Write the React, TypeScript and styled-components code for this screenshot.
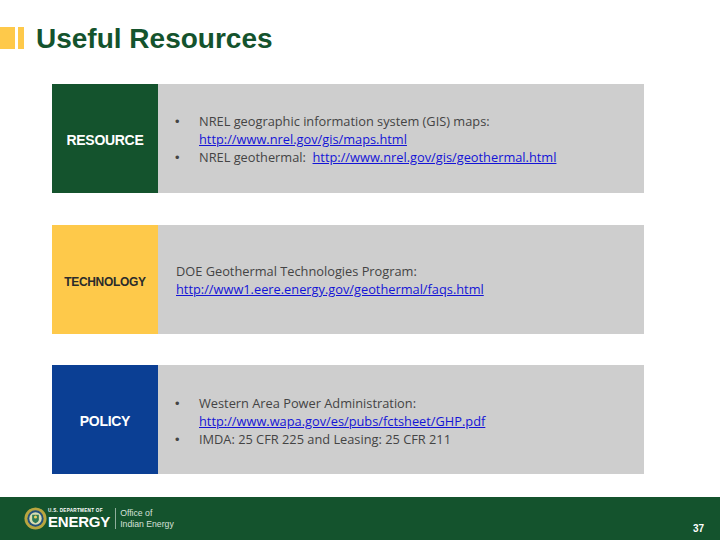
import React from "react";
import styled, { createGlobalStyle } from "styled-components";

const GlobalStyle = createGlobalStyle`
  html, body {
    margin: 0;
    padding: 0;
    background: #fff;
  }
`;

const Slide = styled.div`
  width: 720px;
  height: 540px;
  display: flex;
  flex-direction: column;
  overflow: hidden;
  font-family: "Open Sans", "Liberation Sans", sans-serif;
`;

const Header = styled.header`
  height: 84px;
  flex: none;
  padding-top: 27px;
  box-sizing: border-box;
  display: flex;
  align-items: flex-start;
`;

const Accent = styled.div`
  display: flex;
  gap: 3px;
  height: 22px;
  margin-right: 12px;
`;

const AccentBar = styled.span<{ $w: number }>`
  width: ${(p) => p.$w}px;
  background: #fec94a;
`;

const Title = styled.h1`
  margin: -5px 0 0;
  font-family: "Liberation Sans", Arial, sans-serif;
  font-size: 28px;
  line-height: 33px;
  font-weight: 700;
  color: #14532d;
`;

const Cards = styled.main`
  flex: 1;
  display: flex;
  flex-direction: column;
  gap: 31.5px;
  padding-left: 52px;
`;

const Card = styled.section`
  width: 592px;
  height: 109px;
  display: flex;
  background: #cecece;
`;

const Label = styled.div<{ $bg: string; $fg: string; $size: number; $drop: number }>`
  width: 106px;
  flex: none;
  display: flex;
  align-items: center;
  justify-content: center;
  padding-top: ${(p) => p.$drop}px;
  box-sizing: border-box;
  background: ${(p) => p.$bg};
  color: ${(p) => p.$fg};
  font-family: "Liberation Sans", Arial, sans-serif;
  font-size: ${(p) => p.$size}px;
  font-weight: 700;
  letter-spacing: -0.3px;
`;

const Body = styled.div<{ $drop: number }>`
  flex: 1;
  display: flex;
  flex-direction: column;
  justify-content: center;
  padding: ${(p) => p.$drop}px 0 0 18px;
  font-size: 12.8px;
  line-height: 18px;
  color: #444;
`;

const Bullets = styled.ul`
  margin: 0;
  padding: 0 0 0 23px;
  list-style: none;
`;

const Bullet = styled.li`
  position: relative;
  &::before {
    content: "•";
    position: absolute;
    left: -24px;
    top: 1px;
    font-family: "Liberation Sans", Arial, sans-serif;
  }
`;

const Link = styled.a`
  color: #1414d6;
  text-decoration: underline;
`;

const Footer = styled.footer`
  height: 43px;
  flex: none;
  background: #14532d;
  display: flex;
  align-items: center;
  padding: 0 16px 0 24px;
  color: #fff;
`;

const Brand = styled.div`
  display: flex;
  flex-direction: column;
  margin: 1px 0 0 1px;
  font-family: "Liberation Sans", Arial, sans-serif;
  font-weight: 700;
  line-height: 1;
`;

const BrandTop = styled.span`
  font-size: 4.6px;
  letter-spacing: 0.3px;
  margin-bottom: 1px;
`;

const BrandName = styled.span`
  font-size: 15px;
  letter-spacing: -0.2px;
`;

const Divider = styled.span`
  width: 1px;
  height: 21px;
  background: #8fae9b;
  margin: 0 4px 0 5px;
`;

const Office = styled.div`
  font-family: "Liberation Sans", Arial, sans-serif;
  font-size: 8.7px;
  line-height: 11px;
  color: #d5e0d9;
`;

const PageNo = styled.span`
  margin-left: auto;
  margin-top: 20px;
  font-family: "Liberation Sans", Arial, sans-serif;
  font-size: 10px;
  font-weight: 700;
`;

const Seal = () => (
  <svg width="23" height="23" viewBox="0 0 24 24" aria-hidden="true">
    <circle cx="12" cy="12" r="11.5" fill="#b8a53f" />
    <circle cx="12" cy="12" r="8.5" fill="#23507a" />
    <circle cx="12" cy="12" r="6.5" fill="#d8dcb0" />
    <path d="M8.5 8h7v5c0 2-1.6 3-3.5 4-1.9-1-3.5-2-3.5-4z" fill="#2f7a55" />
    <circle cx="12" cy="10.5" r="1.6" fill="#f0d060" />
  </svg>
);

export default function App() {
  return (
    <Slide>
      <GlobalStyle />
      <Header>
        <Accent>
          <AccentBar $w={15} />
          <AccentBar $w={6} />
        </Accent>
        <Title>Useful Resources</Title>
      </Header>
      <Cards>
        <Card>
          <Label $bg="#14532d" $fg="#fff" $size={14} $drop={2}>RESOURCE</Label>
          <Body $drop={0}>
            <Bullets>
              <Bullet>
                NREL geographic information system (GIS) maps:
                <br />
                <Link>http://www.nrel.gov/gis/maps.html</Link>
              </Bullet>
              <Bullet>
                NREL geothermal:&nbsp; <Link>http://www.nrel.gov/gis/geothermal.html</Link>
              </Bullet>
            </Bullets>
          </Body>
        </Card>
        <Card>
          <Label $bg="#fec94a" $fg="#2b2b2b" $size={12} $drop={5}>TECHNOLOGY</Label>
          <Body $drop={2}>
            <div>DOE Geothermal Technologies Program:</div>
            <Link>http://www1.eere.energy.gov/geothermal/faqs.html</Link>
          </Body>
        </Card>
        <Card>
          <Label $bg="#0b3f94" $fg="#fff" $size={14} $drop={2}>POLICY</Label>
          <Body $drop={2}>
            <Bullets>
              <Bullet>
                Western Area Power Administration:
                <br />
                <Link>http://www.wapa.gov/es/pubs/fctsheet/GHP.pdf</Link>
              </Bullet>
              <Bullet>IMDA: 25 CFR 225 and Leasing: 25 CFR 211</Bullet>
            </Bullets>
          </Body>
        </Card>
      </Cards>
      <Footer>
        <Seal />
        <Brand>
          <BrandTop>U.S. DEPARTMENT OF</BrandTop>
          <BrandName>ENERGY</BrandName>
        </Brand>
        <Divider />
        <Office>
          Office of
          <br />
          Indian Energy
        </Office>
        <PageNo>37</PageNo>
      </Footer>
    </Slide>
  );
}
